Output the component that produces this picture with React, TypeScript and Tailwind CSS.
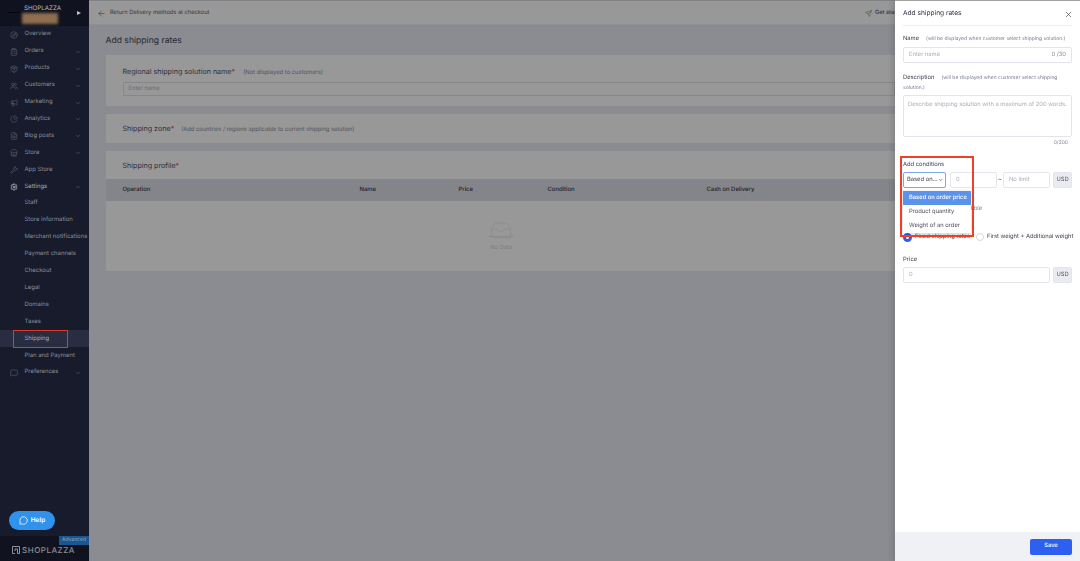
import { ArrowLeft, ChevronDown, ChevronUp, ClipboardList, Compass, Megaphone, MessageCircle, MessageSquare, Package, PieChart, Send, Settings, Store, Users, Wrench, X, FileText } from 'lucide-react';

const menuTop = [
  { label: 'Overview', icon: Compass, arrow: false },
  { label: 'Orders', icon: ClipboardList, arrow: true },
  { label: 'Products', icon: Package, arrow: true },
  { label: 'Customers', icon: Users, arrow: true },
  { label: 'Marketing', icon: Megaphone, arrow: true },
  { label: 'Analytics', icon: PieChart, arrow: true },
  { label: 'Blog posts', icon: FileText, arrow: true },
  { label: 'Store', icon: Store, arrow: true },
  { label: 'App Store', icon: Wrench, arrow: false },
];

const settingsItems = ['Staff', 'Store information', 'Merchant notifications', 'Payment channels', 'Checkout', 'Legal', 'Domains', 'Taxes'];

function Sidebar() {
  return (
    <aside className="w-[89px] h-full shrink-0 bg-[#171b2b] flex flex-col text-[5.95px] text-[#8b8e98]">
      <div className="h-[26px] shrink-0 bg-[#10131f] relative">
        <div className="pl-[24px] pt-[5px] text-[6.200px] leading-[8px] text-[#b9bbc0]">SHOPLAZZA</div>
        <div className="absolute left-[22px] top-[13px] w-[36px] h-[11px] bg-[#8f6e50] blur-[1.5px]" />
        <div className="absolute left-[8px] top-[12px] w-[12px] h-[1px] bg-[#05060a]" />
        <div className="absolute left-[77px] top-[11px] border-y-[2.5px] border-l-[4px] border-y-transparent border-l-[#c4c4c4]" />
      </div>
      <nav className="flex flex-col">
        {menuTop.map((m) => (
          <div key={m.label} className="h-[16.9px] pt-[1px] flex items-center pl-[10px] pr-[8px]">
            <m.icon size={8} strokeWidth={1.4} className="text-[#6f7280] mr-[6.5px] shrink-0" />
            <span className="flex-1">{m.label}</span>
            {m.arrow && <ChevronDown size={6} className="text-[#6f7280]" />}
          </div>
        ))}
        <div className="h-[16.9px] pt-[1px] flex items-center pl-[10px] pr-[8px] text-[#a9abb2]">
          <Settings size={8} strokeWidth={2.4} className="text-[#b5b6bb] mr-[6.5px] shrink-0" />
          <span className="flex-1">Settings</span>
          <ChevronUp size={6} className="text-[#6f7280]" />
        </div>
        {settingsItems.map((s) => (
          <div key={s} className="h-[16.9px] pt-[1px] flex items-center pl-[24.5px] whitespace-nowrap">{s}</div>
        ))}
        <div className="h-[17px] pt-[1px] flex items-center pl-[24.5px] bg-[#292d42] text-[#a9abb2] relative">
          Shipping
          <div className="absolute left-[13px] top-0 w-[55px] h-[18px] border-[1.5px] border-[#e03a26]" />
        </div>
        <div className="h-[16.9px] pt-[1px] flex items-center pl-[24.5px]">Plan and Payment</div>
        <div className="h-[16.9px] pt-[1px] flex items-center pl-[10px] pr-[8px]">
          <MessageSquare size={8} strokeWidth={1.4} className="text-[#6f7280] mr-[6.5px] shrink-0" />
          <span className="flex-1">Preferences</span>
          <ChevronDown size={6} className="text-[#6f7280]" />
        </div>
      </nav>
      <div className="flex-1 flex flex-col justify-end">
        <div className="ml-[9px] mb-[6px] w-[46px] h-[19px] rounded-full bg-[#2f93ee] flex items-center justify-center gap-[3px] text-white text-[6.5px] font-semibold">
          <MessageCircle size={9} strokeWidth={2} />
          Help
        </div>
      </div>
      <div className="h-[25px] shrink-0 bg-[#10131f] relative">
        <div className="absolute right-0 top-0 w-[30px] h-[9px] bg-[#1b5690] text-[#8fa6c0] text-[5px] leading-[9px] text-center">Advanced</div>
        <div className="flex items-center gap-[2px] pl-[12px] pt-[9px] text-[#8e9097]">
          <svg width="8" height="8" viewBox="0 0 8 8" fill="none" stroke="#8e9097" strokeWidth="1">
            <path d="M3 7.500H.5V.5h7v7H5.500V3H3v2" />
          </svg>
          <span className="text-[8px] leading-[10px] font-medium tracking-[0.5px]">SHOPLAZZA</span>
        </div>
      </div>
    </aside>
  );
}

function Card({ children, className }: { children: React.ReactNode; className: string }) {
  return <section className={`bg-[#989898] ${className}`}>{children}</section>;
}

function Required() {
  return <span className="text-[#8e2f2f]">*</span>;
}

function Main() {
  return (
    <main className="flex-1 min-w-0 h-full bg-[#8a8c91] flex flex-col overflow-hidden text-[#2f313a]">
      <header className="h-[25px] shrink-0 pt-[2px] bg-[#989898] border-t border-t-[#808184] border-b border-b-[#8f9094] flex items-center pl-[8px] text-[5.7px] text-[#33353c]">
        <ArrowLeft size={9} strokeWidth={1.5} className="mr-[4px]" />
        <span className="flex-1">Return Delivery methods at checkout</span>
        <div className="w-[30px] flex items-center gap-[3px] overflow-hidden whitespace-nowrap font-medium">
          <Send size={7} strokeWidth={1.3} className="shrink-0" />
          Get started
        </div>
      </header>
      <div className="pl-[16.5px] flex flex-col">
        <h1 className="h-[30px] pt-[3px] flex items-center text-[8.6px] text-[#25272e] font-normal">Add shipping rates</h1>
        <Card className="h-[51px] pl-[17px] pt-[12px] mb-[8px]">
          <div className="text-[7.15px] leading-[10px] text-[#2f313a] whitespace-nowrap">
            Regional shipping solution name<Required />
            <span className="ml-[8px] text-[5.85px] text-[#50525c]">(Not displayed to customers)</span>
          </div>
          <div className="mt-[4px] h-[14px] border border-[#86878b] rounded-l-[1px] pl-[5px] text-[5.8px] leading-[12px] text-[#666870]">Enter name</div>
        </Card>
        <Card className="h-[29px] pt-[1px] pl-[17px] flex items-center mb-[8px]">
          <div className="text-[7.15px] text-[#2f313a] whitespace-nowrap">
            Shipping zone<Required />
            <span className="ml-[7px] text-[5.75px] text-[#50525c]">(Add countries / regions applicable to current shipping solution)</span>
          </div>
        </Card>
        <Card className="h-[120px] flex flex-col">
          <div className="h-[28px] shrink-0 pl-[17px] pt-[3px] flex items-center text-[7.15px]">
            <span>Shipping profile<Required /></span>
          </div>
          <div className="h-[22px] shrink-0 pt-[1px] bg-[#84858a] grid grid-cols-[237px_99px_89px_159px_1fr] pl-[17px] items-center text-[5.9px] font-medium text-[#1f2026]">
            <span>Operation</span>
            <span>Name</span>
            <span>Price</span>
            <span>Condition</span>
            <span>Cash on Delivery</span>
          </div>
          <div className="flex-1 flex flex-col items-center pt-[21px] pl-[2px] text-[#7d7e80] text-[5.8px]">
            <svg width="26" height="17" viewBox="0 0 26 17" fill="none" stroke="#8a8a8c" strokeWidth="0.7">
              <ellipse cx="13" cy="14.500" rx="13" ry="2" fill="#8f8f8f" stroke="none" />
              <path d="M3.500 7 7 1h12l3.500 6v7.500h-18.500z" fill="#989898" />
              <path d="M3.500 7h6c0 2 1 3 3.500 3s3.500-1 3.500-3h5.500" />
            </svg>
            <span className="mt-[5px]">No Data</span>
          </div>
        </Card>
      </div>
    </main>
  );
}

function Field({ value, placeholder, className }: { value?: string; placeholder: string; className: string }) {
  return (
    <div className={`h-[16px] border border-[#e3e5ec] rounded-[2px] flex items-center justify-between px-[5px] text-[5.8px] text-[#a9adb8] ${className}`}>
      <span>{placeholder}</span>
      {value && <span className="text-[#8a8e9a]">{value}</span>}
    </div>
  );
}

function Usd() {
  return <div className="w-[19px] h-[16px] shrink-0 bg-[#e9ebf1] border border-[#e3e5ec] rounded-[2px] flex items-center justify-center text-[5.8px] text-[#555865]">USD</div>;
}

function Panel() {
  return (
    <aside className="w-[185px] h-full shrink-0 bg-white border-t border-t-[#a0a0a0] flex flex-col text-[5.8px] text-[#3a3d4a] shadow-[-2px_0_6px_rgba(0,0,0,0.15)]">
      <div className="flex-1 px-[8px] relative">
        <div className="h-[25px] pt-[2px] border-b border-[#eceef2] flex items-center justify-between text-[6.6px] text-[#2f3240]">
          Add shipping rates
          <X size={9} strokeWidth={1.6} className="mr-[-1px] text-[#333]" />
        </div>
        <div className="mt-[9px] h-[8px] leading-[8px] whitespace-nowrap">
          Name
          <span className="ml-[7px] text-[5px] text-[#7b7f92]">(will be displayed when customer select shipping solution.)</span>
        </div>
        <Field placeholder="Enter name" value="0 /30" className="mt-[4px] w-[169px]" />
        <div className="mt-[10px] h-[18px] leading-[9px] w-[169px]">
          Description
          <span className="ml-[7px] text-[5px] text-[#7b7f92]">(will be displayed when customer select shipping solution.)</span>
        </div>
        <div className="mt-[4px] w-[169px] h-[42px] border border-[#e3e5ec] rounded-[2px] px-[4px] pt-[4px] text-[5.8px] leading-[9px] text-[#a9adb8] whitespace-nowrap overflow-hidden">
          Describe shipping solution with a maximum of 200 words.
        </div>
        <div className="mt-[2px] h-[8px] w-[165px] text-right text-[5px] leading-[8px] text-[#8a8e9a]">0/200</div>

        <div className="mt-[13px] h-[9px] leading-[9px]">Add conditions</div>
        <div className="mt-[3px] flex items-center w-[169px]">
          <div className="w-[43px] h-[16px] shrink-0 border border-[#7ea4ef] rounded-[2px] flex items-center justify-between pl-[3px] pr-[2px] text-[#3a3d4a] whitespace-nowrap">
            Based on...
            <ChevronDown size={6} strokeWidth={2.5} />
          </div>
          <Field placeholder="0" className="ml-[4px] w-[47px]" />
          <span className="w-[6px] text-center text-[#444]">~</span>
          <Field placeholder="No limit" className="w-[47px]" />
          <div className="ml-[3px]"><Usd /></div>
        </div>

        <div className="mt-[15px] h-[12px] pl-[68px] leading-[12px] text-[#7b7f92]">lible</div>

        <div className="mt-[17px] h-[10px] flex items-center whitespace-nowrap">
          <span className="w-[9px] h-[9px] shrink-0 rounded-full border-[3px] border-[#2f5fe8] bg-white mr-[3px]" />
          <span className="w-[61px] shrink-0">Fixed shipping rates</span>
          <span className="w-[8px] h-[8px] shrink-0 rounded-full border border-[#d5d7de] mr-[3px]" />
          <span>First weight + Additional weight</span>
        </div>
        <div className="mt-[13px] h-[9px] leading-[9px]">Price</div>
        <div className="mt-[3px] flex items-center gap-[3px] w-[169px]">
          <Field placeholder="0" className="flex-1" />
          <Usd />
        </div>

        {/* open condition dropdown and its red highlight */}
        <div className="absolute left-[8px] top-[190px] w-[68px] h-[42px] bg-white shadow-[0_1px_4px_rgba(0,0,0,0.2)] flex flex-col text-[#4b4e5a]">
          <div className="h-[14px] bg-[#5b93ec] text-white flex items-center pl-[6px] whitespace-nowrap font-medium">Based on order price</div>
          <div className="h-[14px] flex items-center pl-[6px]">Product quantity</div>
          <div className="h-[14px] flex items-center pl-[6px]">Weight of an order</div>
        </div>
        <div className="absolute left-[5px] top-[155px] w-[74px] h-[81px] border-2 border-[#ef3f25]" />
      </div>
      <div className="h-[29px] shrink-0 bg-[#f0f1f5] flex items-center justify-end pr-[8px]">
        <div className="w-[42px] h-[16px] rounded-[2px] bg-[#2d5ff0] text-white text-[5.8px] font-medium flex items-center justify-center">Save</div>
      </div>
    </aside>
  );
}

export default function App() {
  return (
    <div className='w-[1080px] h-[561px] flex overflow-hidden antialiased blur-[0.3px] [text-rendering:geometricPrecision] font-["Inter","Liberation_Sans",sans-serif]'>
      <Sidebar />
      <Main />
      <Panel />
    </div>
  );
}
